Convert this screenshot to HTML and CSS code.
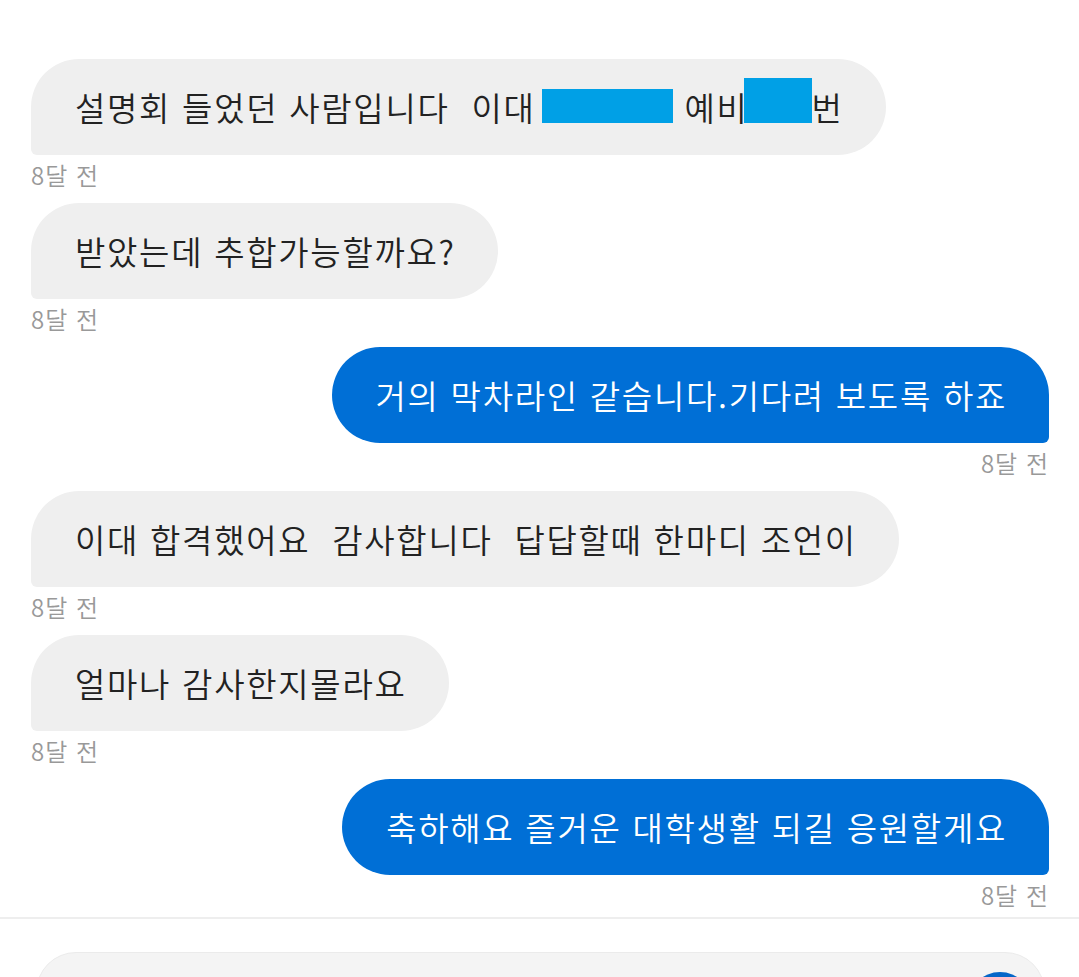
FILE: index.html
```html
<!DOCTYPE html>
<html lang="ko">
<head>
    <meta charset="UTF-8">
    <meta name="viewport" content="width=device-width, initial-scale=1.0">
    <title>쪽지</title>
    <link rel="stylesheet" href="styles.css">
</head>
<body>
    <!-- 대화 목록 -->
    <div class="chat">
        <div class="msg">
            <div class="bubble">설명회 들었던 사람입니다&nbsp; 이대 <span class="hide hide_a"></span> 예비<span class="hide hide_b"></span>번</div>
            <div class="time">8달 전</div>
        </div>
        <div class="msg">
            <div class="bubble">받았는데 추합가능할까요?</div>
            <div class="time">8달 전</div>
        </div>
        <div class="msg me">
            <div class="bubble">거의 막차라인 같습니다.기다려 보도록 하죠</div>
            <div class="time">8달 전</div>
        </div>
        <div class="msg">
            <div class="bubble">이대 합격했어요&nbsp;&nbsp;감사합니다&nbsp;&nbsp;답답할때 한마디 조언이</div>
            <div class="time">8달 전</div>
        </div>
        <div class="msg">
            <div class="bubble">얼마나 감사한지몰라요</div>
            <div class="time">8달 전</div>
        </div>
        <div class="msg me">
            <div class="bubble">축하해요 즐거운 대학생활 되길 응원할게요</div>
            <div class="time">8달 전</div>
        </div>
    </div>

    <!-- 입력창 -->
    <div class="input_bar">
        <div class="input_box">
            <div class="send_btn"></div>
        </div>
    </div>
</body>
</html>
```

FILE: styles.css
```css
*{
    margin: 0;
    padding: 0;
    box-sizing: border-box;
}
html,body{
    height: 100%;
    overflow: hidden;
}
body{
    background-color: #fff;
    font-family: "Noto Sans CJK KR", "Noto Sans", sans-serif;
    color: #222;
}
.chat{
    padding: 59px 30px 0 31px;
}
.msg{
    display: flex;
    flex-direction: column;
    align-items: flex-start;
    margin-bottom: 8px;
}
.msg.me{
    align-items: flex-end;
}
.bubble{
    height: 96px;
    line-height: 96px;
    padding: 0 42px 0 44px;
    font-size: 33px;
    font-weight: 350;
    letter-spacing: 1.7px;
    white-space: nowrap;
    background-color: #efefef;
    border-radius: 48px 48px 48px 6px;
}
.msg.me .bubble{
    background-color: #006fd6;
    color: #fff;
    border-radius: 48px 48px 6px 48px;
}
.time{
    height: 40px;
    line-height: 40px;
    font-size: 24px;
    font-weight: 350;
    letter-spacing: 1px;
    color: #999;
}
/* 가린 부분 */
.hide{
    display: inline-block;
    background-color: #00a0e6;
    vertical-align: -2px;
}
.hide_a{
    width: 131px;
    height: 34px;
    margin-left: -4px;
}
.hide_b{
    width: 68px;
    height: 45px;
    margin-left: -5px;
}
.input_bar{
    border-top: 2px solid #eee;
    margin-top: -6px;
    padding: 33px 34px 0 36px;
}
.input_box{
    height: 80px;
    background-color: #f4f4f4;
    border: 1px solid #ebebeb;
    border-radius: 50px;
    display: flex;
    justify-content: flex-end;
    padding: 19px 12px 0 0;
}
.send_btn{
    width: 64px;
    height: 64px;
    border-radius: 50%;
    background-color: #0566c8;
}
```
